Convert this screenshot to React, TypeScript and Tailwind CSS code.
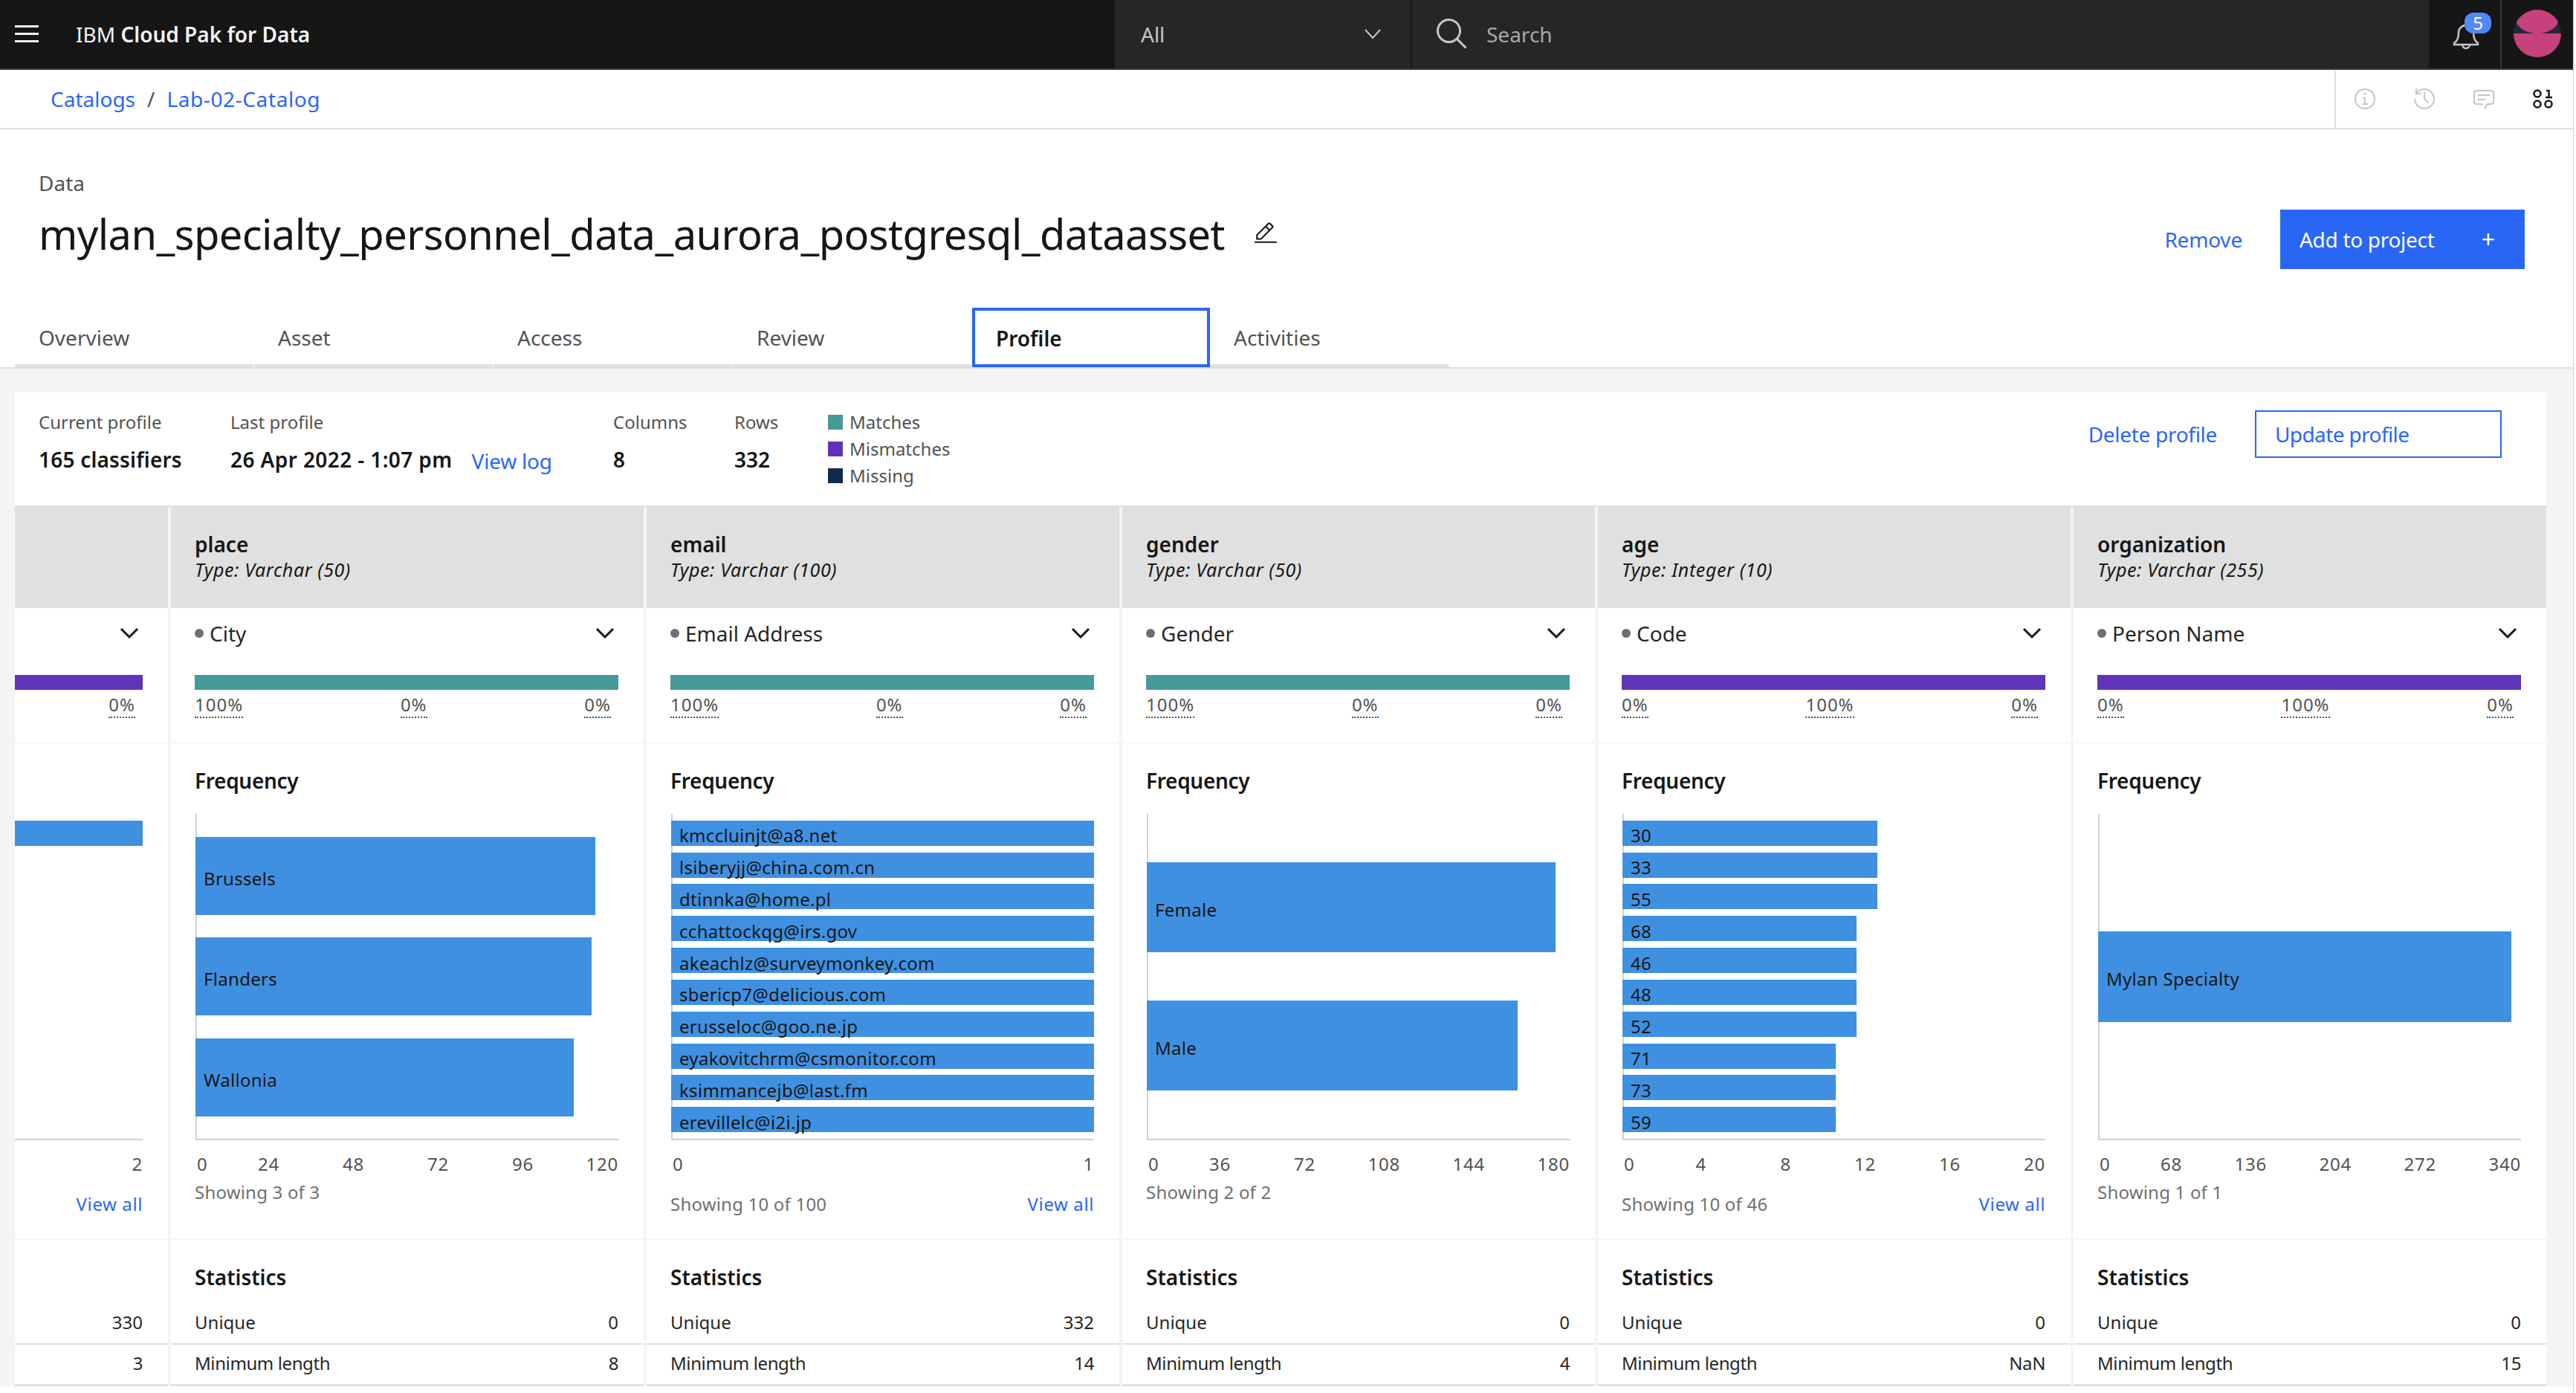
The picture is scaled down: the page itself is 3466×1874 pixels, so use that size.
const COLUMNS = [
  {
    name: "",
    type: "",
    className: "",
    bar: "bg-[#6133b9]",
    pct: ["", "", "0%"],
    barH: "h-[34px]",
    bars: [{ w: 569 }, { w: 280 }, { w: 280 }, { w: 280 }, { w: 280 }, { w: 280 }, { w: 280 }, { w: 280 }, { w: 280 }, { w: 280 }],
    ticks: ["", "", "2"],
    showing: "",
    viewAll: true,
    unique: "330",
    minLength: "3",
  },
  {
    name: "place",
    type: "Type: Varchar (50)",
    className: "City",
    bar: "bg-[#469a98]",
    pct: ["100%", "0%", "0%"],
    barH: "h-[105px]",
    bars: [
      { w: 538, label: "Brussels" },
      { w: 533, label: "Flanders" },
      { w: 509, label: "Wallonia" },
    ],
    ticks: ["0", "24", "48", "72", "96", "120"],
    showing: "Showing 3 of 3",
    viewAll: false,
    unique: "0",
    minLength: "8",
  },
  {
    name: "email",
    type: "Type: Varchar (100)",
    className: "Email Address",
    bar: "bg-[#469a98]",
    pct: ["100%", "0%", "0%"],
    barH: "h-[34px]",
    bars: [
      "kmccluinjt@a8.net",
      "lsiberyjj@china.com.cn",
      "dtinnka@home.pl",
      "cchattockqg@irs.gov",
      "akeachlz@surveymonkey.com",
      "sbericp7@delicious.com",
      "erusseloc@goo.ne.jp",
      "eyakovitchrm@csmonitor.com",
      "ksimmancejb@last.fm",
      "erevillelc@i2i.jp",
    ].map((label) => ({ w: 569, label })),
    ticks: ["0", "1"],
    showing: "Showing 10 of 100",
    viewAll: true,
    unique: "332",
    minLength: "14",
  },
  {
    name: "gender",
    type: "Type: Varchar (50)",
    className: "Gender",
    bar: "bg-[#469a98]",
    pct: ["100%", "0%", "0%"],
    barH: "h-[121px]",
    bars: [
      { w: 550, label: "Female" },
      { w: 499, label: "Male" },
    ],
    ticks: ["0", "36", "72", "108", "144", "180"],
    showing: "Showing 2 of 2",
    viewAll: false,
    unique: "0",
    minLength: "4",
  },
  {
    name: "age",
    type: "Type: Integer (10)",
    className: "Code",
    bar: "bg-[#6133b9]",
    pct: ["0%", "100%", "0%"],
    barH: "h-[34px]",
    bars: [
      { w: 343, label: "30" },
      { w: 343, label: "33" },
      { w: 343, label: "55" },
      { w: 315, label: "68" },
      { w: 315, label: "46" },
      { w: 315, label: "48" },
      { w: 315, label: "52" },
      { w: 287, label: "71" },
      { w: 287, label: "73" },
      { w: 287, label: "59" },
    ],
    ticks: ["0", "4", "8", "12", "16", "20"],
    showing: "Showing 10 of 46",
    viewAll: true,
    unique: "0",
    minLength: "NaN",
  },
  {
    name: "organization",
    type: "Type: Varchar (255)",
    className: "Person Name",
    bar: "bg-[#6133b9]",
    pct: ["0%", "100%", "0%"],
    barH: "h-[122px]",
    bars: [{ w: 556, label: "Mylan Specialty" }],
    ticks: ["0", "68", "136", "204", "272", "340"],
    showing: "Showing 1 of 1",
    viewAll: false,
    unique: "0",
    minLength: "15",
  },
];

const TABS = ["Overview", "Asset", "Access", "Review", "Profile", "Activities"];

function Chevron() {
  return (
    <svg width="26" height="16" viewBox="0 0 26 16" fill="none" stroke="#161616" strokeWidth="3">
      <path d="M2 2l11 11L24 2" />
    </svg>
  );
}

function ProfileColumn({ col }: { col: (typeof COLUMNS)[number] }) {
  // the first column is scrolled almost out of view, its left side is never seen
  const hidden = !col.name;
  return (
    <div className="w-[636px] shrink-0 bg-white">
      <div className="h-[136px] bg-[#e0e0e0] pl-[32px] pt-[32px]">
        <div className="text-[28px] leading-[36px] font-semibold text-[#161616]">{col.name}</div>
        <div className="text-[25px] leading-[32px] tracking-[0.6px] italic text-[#161616]">{col.type}</div>
      </div>

      <div className="h-[180px] pl-[32px] pr-[34px] pt-[16px]">
        <div className="flex h-[36px] items-center justify-between pr-[5px]">
          <div className="flex items-center">
            {!hidden && <span className="mr-[8px] h-[12px] w-[12px] rounded-full bg-[#6f6f6f]" />}
            <span className="text-[28px] leading-[36px] text-[#262626]">{col.className}</span>
          </div>
          <Chevron />
        </div>
        <div className={`mt-[38px] h-[20px] ${col.bar}`} />
        <div className="mt-[4px] flex justify-between pr-[10px]">
          {col.pct.map((p, i) => (
            <span key={i} className={`text-[24px] leading-[32px] tracking-[1px] text-[#525252] ${p ? "border-b-2 border-dotted border-[#525252]" : ""}`}>
              {p}
            </span>
          ))}
        </div>
      </div>

      <div className="h-[668px] border-t-2 border-[#f4f4f4] pl-[32px] pr-[34px] pt-[32px]">
        <div className="h-[36px] text-[28px] leading-[36px] tracking-[-0.3px] font-semibold text-[#161616]">{!hidden && "Frequency"}</div>
        <div className="ml-[1px] mt-[27px] flex h-[439px] flex-col items-start justify-evenly border-b-2 border-l-2 border-[#d0d0d0]">
          {col.bars.map((b, i) => (
            <div key={i} className={`-ml-[2px] flex shrink-0 items-center bg-[#3f90e1] pl-[11px] pt-[7px] ${col.barH}`} style={{ width: b.w }}>
              <span className="text-[24px] leading-none tracking-[0.3px] whitespace-nowrap text-[#161616]">{"label" in b ? b.label : ""}</span>
            </div>
          ))}
        </div>
        <div className="mt-[16px] flex text-[24px] leading-[32px] tracking-[0.8px] text-[#525252]">
          {col.ticks.slice(1).map((t, i) => (
            <div key={i} className="flex flex-1 justify-between">
              <span className="pl-[3px]">{i === 0 ? col.ticks[0] : ""}</span>
              <span>{t}</span>
            </div>
          ))}
        </div>
        <div className={`flex justify-between text-[24px] leading-[32px] tracking-[0.2px] ${col.viewAll ? "mt-[22px]" : "mt-[6px]"}`}>
          <span className="text-[#6f6f6f]">{col.showing}</span>
          {col.viewAll && <span className="tracking-[0.6px] text-[#2a66f6]">View all</span>}
        </div>
      </div>

      <div className="border-t-2 border-[#f4f4f4]">
        <div className="h-[68px] px-[32px] pt-[32px] text-[28px] leading-[36px] font-semibold text-[#161616]">{!hidden && "Statistics"}</div>
        <div className="flex justify-between border-b-2 border-[#e0e0e0] pl-[32px] pr-[34px] pt-[27px] pb-[12px] text-[24px] leading-[32px] text-[#262626]">
          <span>{!hidden && "Unique"}</span>
          <span>{col.unique}</span>
        </div>
        <div className="flex justify-between border-b-[3px] border-[#e0e0e0] pl-[32px] pr-[34px] pt-[9px] pb-[12px] text-[24px] leading-[32px] tracking-[-0.4px] text-[#262626]">
          <span>{!hidden && "Minimum length"}</span>
          <span>{col.minLength}</span>
        </div>
      </div>
    </div>
  );
}

export default function App() {
  return (
    <div className="flex h-[1874px] w-full overflow-hidden bg-white font-['Noto_Sans',sans-serif]">
      <div className="w-[3462px] shrink-0">
        {/* top bar */}
        <header className="flex h-[94px] border-b-2 border-[#393939] bg-[#161616]">
          <div className="flex w-[1500px] items-center pl-[20px]">
            <svg width="32" height="24" viewBox="0 0 32 24" fill="#f4f4f4">
              <rect y="0" width="32" height="3" />
              <rect y="10" width="32" height="3" />
              <rect y="20" width="32" height="3" />
            </svg>
            <div className="ml-[50px] text-[28px] text-[#f4f4f4]">
              IBM <span className="font-semibold">Cloud Pak for Data</span>
            </div>
          </div>
          <div className="flex w-[400px] items-center justify-between border-r-2 border-[#161616] bg-[#262626] pl-[35px] pr-[40px]">
            <span className="text-[28px] text-[#c6c6c6]">All</span>
            <svg width="22" height="14" viewBox="0 0 22 14" fill="none" stroke="#c6c6c6" strokeWidth="2">
              <path d="M1 1l10 11L21 1" />
            </svg>
          </div>
          <div className="flex w-[1368px] items-center rounded-br-[4px] bg-[#262626] pl-[30px]">
            <svg width="48" height="48" viewBox="0 0 32 32" fill="#c6c6c6">
              <path d="M29,27.5859l-7.5521-7.5521a11.0177,11.0177,0,1,0-1.4141,1.4141L27.5859,29ZM4,13a9,9,0,1,1,9,9A9.01,9.01,0,0,1,4,13Z" />
            </svg>
            <span className="ml-[22px] text-[28px] text-[#a8a8a8]">Search</span>
          </div>
          <div className="relative flex w-[98px] items-center justify-center border-r-2 border-[#393939]">
            <svg className="ml-[3px] mt-[3px]" width="36" height="38" viewBox="0 0 36 38" fill="none" stroke="#c6c6c6" strokeWidth="2.5">
              <path d="M2 29c5-3 6-8 6-14a10 10 0 0 1 20 0c0 6 1 11 6 14v2H2z" />
              <path d="M13 31a5 5 0 0 0 10 0" />
            </svg>
            <span className="absolute left-[48px] top-[17px] flex h-[28px] w-[36px] items-center justify-center rounded-[12px] bg-[#5189f9] text-[24px] leading-none text-white">
              5
            </span>
          </div>
          <div className="flex flex-1 items-center justify-center pb-[2px]">
            <svg width="64" height="64" viewBox="0 0 64 64">
              <clipPath id="avatar">
                <circle cx="32" cy="32" r="32" />
              </clipPath>
              <g clipPath="url(#avatar)">
                <rect width="64" height="64" fill="#1c2a38" />
                <ellipse cx="32" cy="12" rx="29" ry="20" fill="#c7417d" />
                <rect y="32" width="64" height="32" fill="#c7417d" />
              </g>
            </svg>
          </div>
        </header>

        {/* breadcrumb */}
        <div className="flex h-[80px] border-b-2 border-[#e0e0e0]">
          <div className="flex flex-1 items-center pl-[68px] text-[28px] text-[#2a66f6]">
            <span>Catalogs</span>
            <span className="mx-[16px] text-[#525252]">/</span>
            <span className="tracking-[0.6px]">Lab-02-Catalog</span>
          </div>
          <div className="flex w-[321px] items-center justify-between border-l-2 border-[#e0e0e0] pl-[23px] pr-[24px]">
            <svg width="32" height="32" viewBox="0 0 32 32" fill="#c6c6c6">
              <path d="M17 22V14H13v2h2v6H12v2h8V22zM16 8a1.5 1.5 0 1 0 1.5 1.5A1.5 1.5 0 0 0 16 8z" />
              <path d="M16,30A14,14,0,1,1,30,16,14,14,0,0,1,16,30ZM16,4A12,12,0,1,0,28,16,12,12,0,0,0,16,4Z" />
            </svg>
            <svg width="32" height="32" viewBox="0 0 32 32" fill="#c6c6c6">
              <path d="M20.59 22L15 16.41 15 7 17 7 17 15.58 22 20.59 20.59 22z" />
              <path d="M16,2A13.94,13.94,0,0,0,6,6.23V2H4v8h8V8H7.08A12,12,0,1,1,4,16H2A14,14,0,1,0,16,2Z" />
            </svg>
            <svg width="32" height="32" viewBox="0 0 32 32" fill="#c6c6c6">
              <path d="M17.74,30,16,29l4-7h6a2,2,0,0,0,2-2V8a2,2,0,0,0-2-2H6A2,2,0,0,0,4,8V20a2,2,0,0,0,2,2h9v2H6a4,4,0,0,1-4-4V8A4,4,0,0,1,6,4H26a4,4,0,0,1,4,4V20a4,4,0,0,1-4,4H21.16Z" />
              <path d="M8 10H24V12H8zM8 16H18V18H8z" />
            </svg>
            <svg width="32" height="32" viewBox="0 0 32 32" fill="none" stroke="#161616" strokeWidth="2.5">
              <circle cx="8" cy="9" r="4.5" />
              <circle cx="8" cy="23" r="4.5" />
              <circle cx="23" cy="23" r="4.5" />
              <path d="M20 5h3.5v9M19 14h9" />
            </svg>
          </div>
        </div>

        {/* title */}
        <div className="flex h-[240px] justify-between pl-[52px] pr-[65px]">
          <div className="pt-[54px]">
            <div className="text-[28px] leading-[36px] text-[#525252]">Data</div>
            <div className="mt-[16px] flex items-center">
              <h1 className="text-[56px] leading-[68px] tracking-[-0.6px] text-[#161616]">mylan_specialty_personnel_data_aurora_postgresql_dataasset</h1>
              <svg className="ml-[38px]" width="34" height="34" viewBox="0 0 32 32" fill="#161616">
                <path d="M2 26H30V28H2zM25.4 9c.8-.8.8-2 0-2.8 0 0 0 0 0 0l-3.6-3.6c-.8-.8-2-.8-2.8 0 0 0 0 0 0 0l-15 15V24h6.4L25.4 9zM20.4 4L24 7.6l-3 3L17.4 7 20.4 4zM6 22v-3.6l10-10 3.6 3.6-10 10H6z" />
              </svg>
            </div>
          </div>
          <div className="flex items-start gap-[51px] pt-[108px]">
            <span className="mt-[22px] text-[28px] leading-[36px] tracking-[-0.2px] text-[#2a66f6]">Remove</span>
            <div className="flex h-[80px] w-[329px] items-center justify-between bg-[#2a66f6] pl-[26px] pr-[40px] text-[28px] text-white">
              <span className="tracking-[-0.3px]">Add to project</span>
              <span className="text-[32px] leading-none">+</span>
            </div>
          </div>
        </div>

        {/* tabs */}
        <div className="flex h-[82px] border-b-2 border-[#e0e0e0] pl-[20px]">
          {TABS.map((t) =>
            t === "Profile" ? (
              <div key={t} className="z-10 flex h-[80px] w-[320px] items-center border-4 border-[#2a66f6] pl-[28px] pt-[2px] text-[28px] font-semibold text-[#161616]">
                {t}
              </div>
            ) : (
              <div key={t} className="flex h-[80px] w-[322px] items-center border-b-4 border-r-2 border-b-[#e0e0e0] border-r-white pl-[32px] pt-[4px] text-[28px] text-[#525252]">
                {t}
              </div>
            ),
          )}
        </div>

        {/* profile card */}
        <div className="bg-[#f4f4f4] pl-[20px] pr-[36px] pt-[32px]">
          <div className="flex h-[152px] justify-between bg-white pl-[32px] pr-[60px] pt-[24px]">
            <div className="flex">
              <div className="w-[258px]">
                <div className="text-[24px] leading-[32px] text-[#525252]">Current profile</div>
                <div className="mt-[16px] text-[28px] leading-[36px] tracking-[0.2px] font-semibold text-[#161616]">165 classifiers</div>
              </div>
              <div className="w-[515px]">
                <div className="text-[24px] leading-[32px] text-[#525252]">Last profile</div>
                <div className="mt-[16px] flex text-[28px] leading-[36px]">
                  <span className="tracking-[0.4px] font-semibold text-[#161616]">26 Apr 2022 - 1:07 pm</span>
                  <span className="ml-[26px] mt-[2px] tracking-[-0.2px] text-[#2a66f6]">View log</span>
                </div>
              </div>
              <div className="w-[163px]">
                <div className="text-[24px] leading-[32px] text-[#525252]">Columns</div>
                <div className="mt-[16px] text-[28px] leading-[36px] font-semibold text-[#161616]">8</div>
              </div>
              <div className="w-[126px]">
                <div className="text-[24px] leading-[32px] text-[#525252]">Rows</div>
                <div className="mt-[16px] text-[28px] leading-[36px] font-semibold text-[#161616]">332</div>
              </div>
              <div className="flex flex-col gap-[4px]">
                {[
                  ["Matches", "bg-[#469a98]"],
                  ["Mismatches", "bg-[#6133b9]"],
                  ["Missing", "bg-[#0f2b4a]"],
                ].map(([label, color]) => (
                  <div key={label} className="flex items-center text-[24px] leading-[32px] text-[#525252]">
                    <span className={`mr-[9px] h-[20px] w-[20px] ${color}`} />
                    {label}
                  </div>
                ))}
              </div>
            </div>
            <div className="flex items-start gap-[51px]">
              <span className="mt-[14px] text-[28px] leading-[36px] tracking-[-0.3px] text-[#2a66f6]">Delete profile</span>
              <div className="flex h-[64px] w-[332px] items-center border-2 border-[#2a66f6] pl-[25px] text-[28px] tracking-[-0.6px] text-[#2a66f6]">
                Update profile
              </div>
            </div>
          </div>

          <div className="flex gap-[4px] border-t-2 border-[#e0e0e0]">
            <div className="flex w-[206px] shrink-0 justify-end overflow-hidden">
              <ProfileColumn col={COLUMNS[0]} />
            </div>
            {COLUMNS.slice(1).map((col) => (
              <ProfileColumn key={col.name} col={col} />
            ))}
          </div>
        </div>
      </div>
      <div className="flex-1 border-l border-[#d0d0d0] bg-white" />
    </div>
  );
}
